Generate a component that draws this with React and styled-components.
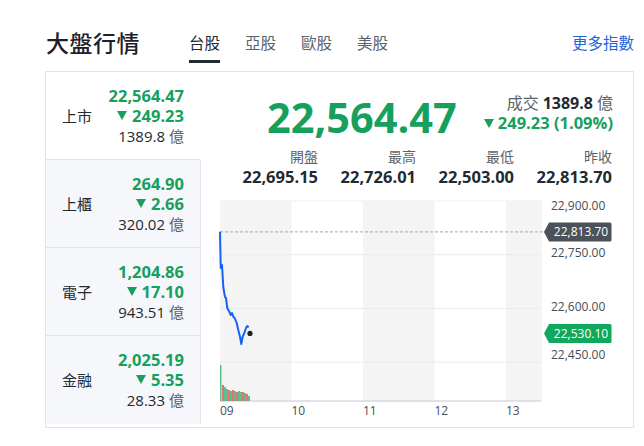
import React from "react";
import styled, { createGlobalStyle } from "styled-components";

const GREEN = "#17a05d";
const DARK = "#232a31";
const GREY = "#5b636a";
const LINE = "#e0e3e8";

const Global = createGlobalStyle`
  html, body { margin: 0; padding: 0; background: #fff; }
  body {
    font-family: "Open Sans", "Noto Sans CJK TC", "Noto Sans", sans-serif;
    color: ${DARK};
    -webkit-font-smoothing: antialiased;
  }
`;

const Page = styled.div`
  width: 644px;
  height: 446px;
  box-sizing: border-box;
  padding: 0 11px 0 45px;
  overflow: hidden;
`;

const Header = styled.div`
  display: flex;
  align-items: flex-end;
  height: 63px;
  margin-bottom: 8px;
`;

const Title = styled.h1`
  margin: 0 49px 4px 1px;
  font-size: 23px;
  line-height: 32px;
  font-weight: 500;
  color: #1d2228;
  letter-spacing: 0.5px;
`;

const Tabs = styled.nav`
  display: flex;
  gap: 25px;
`;

const Tab = styled.span`
  font-size: 15.5px;
  line-height: 22px;
  padding-bottom: 6px;
  border-bottom: 3px solid ${(p) => (p.$active ? DARK : "transparent")};
  color: ${(p) => (p.$active ? DARK : GREY)};
`;

const MoreLink = styled.a`
  margin-left: auto;
  margin-right: -1px;
  margin-bottom: 9px;
  font-size: 15.5px;
  line-height: 22px;
  color: #1e66d6;
  text-decoration: none;
`;

const Card = styled.section`
  display: flex;
  width: 589px;
  height: 357px;
  box-sizing: border-box;
  border: 1px solid ${LINE};
`;

const LeftCol = styled.div`
  display: flex;
  flex-direction: column;
  width: 155px;
  flex: none;
`;

const IndexRow = styled.div`
  display: flex;
  align-items: center;
  justify-content: space-between;
  height: 88px;
  box-sizing: border-box;
  padding: 0 16px;
  background: ${(p) => (p.$active ? "#fff" : "#f5f7fa")};
  border-right: 1px solid ${(p) => (p.$active ? "transparent" : LINE)};
  border-bottom: 1px solid ${(p) => (p.$last ? "transparent" : LINE)};
`;

const RowLabel = styled.span`
  font-size: 15px;
  line-height: 20px;
  color: ${DARK};
`;

const RowValues = styled.div`
  display: flex;
  flex-direction: column;
  align-items: flex-end;
`;

const GreenLine = styled.span`
  display: flex;
  align-items: center;
  font-size: 16.5px;
  line-height: 20px;
  font-weight: 700;
  color: ${GREEN};
`;

const Caret = styled.span`
  display: inline-block;
  width: 0;
  height: 0;
  border-left: 5.5px solid transparent;
  border-right: 5.5px solid transparent;
  border-top: 9px solid ${GREEN};
  margin-right: ${(p) => p.$gap || 5}px;
`;

const VolumeLine = styled.span`
  font-size: 15px;
  line-height: 20px;
  color: ${DARK};
`;

const Unit = styled.span`
  color: ${GREY};
  margin-left: 4px;
`;

const RightPanel = styled.div`
  flex: 1;
  display: flex;
  flex-direction: column;
`;

const Summary = styled.div`
  padding: 19px 20px 0 19px;
`;

const TopRow = styled.div`
  display: flex;
  justify-content: flex-end;
  gap: 27px;
  height: 52px;
`;

const BigPrice = styled.div`
  font-size: 41.5px;
  line-height: 52px;
  font-weight: 700;
  color: ${GREEN};
`;

const TradeInfo = styled.div`
  display: flex;
  flex-direction: column;
  align-items: flex-end;
  margin-top: 2px;
`;

const TradeLine = styled.span`
  font-size: 16px;
  line-height: 20px;
  color: ${GREY};
`;

const Strong = styled.b`
  color: ${DARK};
  font-weight: 700;
  margin: 0 4px;
`;

const Stats = styled.div`
  display: grid;
  grid-template-columns: repeat(4, 98px);
  margin-top: 4px;
  text-align: right;
`;

const StatLabel = styled.div`
  font-size: 14px;
  line-height: 20px;
  color: ${GREY};
`;

const StatValue = styled.div`
  font-size: 16.5px;
  line-height: 20px;
  font-weight: 700;
  color: ${DARK};
`;

const ChartSvg = styled.svg`
  display: block;
  width: 431px;
  height: 239px;
  font-family: "Open Sans", sans-serif;
`;

const rows = [
  { name: "上市", value: "22,564.47", change: "249.23", vol: "1389.8", active: true },
  { name: "上櫃", value: "264.90", change: "2.66", vol: "320.02" },
  { name: "電子", value: "1,204.86", change: "17.10", vol: "943.51" },
  { name: "金融", value: "2,025.19", change: "5.35", vol: "28.33" },
];

const stats = [
  ["開盤", "22,695.15"],
  ["最高", "22,726.01"],
  ["最低", "22,503.00"],
  ["昨收", "22,813.70"],
];

const X0 = 19;
const HOUR = 71.5;
const TOP = 14;
const BOTTOM = 214;
const yOf = (v) => TOP + ((22900 - v) / 150) * 53.7;

const linePts = [
  [19, 44.7], [19.7, 81], [21, 78], [22.3, 100], [24, 110], [25, 111],
  [26.3, 121], [28.3, 124.7], [29.7, 128], [31, 126], [32.3, 129.7],
  [33.7, 131], [35.7, 136], [37.3, 143], [39, 149.7], [40.3, 157],
  [41.7, 149.7], [43.3, 146], [45, 141], [46.3, 139], [47.7, 140.3],
];

const bars = [
  [19, 178, "g"], [21, 198, "r"], [23, 200, "g"], [25, 202, "g"], [27, 203, "r"],
  [29, 204, "g"], [31, 203, "r"], [33, 204, "g"], [35, 205, "r"], [37, 204, "g"],
  [39, 205, "g"], [41, 205, "r"], [43, 206, "g"], [45, 207, "r"], [47, 209, "g"],
];

function Tag({ y, label, color }) {
  const h = 19;
  const x = 343;
  const w = 66;
  const d = `M${x} ${y} L${x + 5} ${y - h / 2} L${x + w} ${y - h / 2} Q${x + w + 1.5} ${y - h / 2} ${x + w + 1.5} ${y - h / 2 + 1.5} L${x + w + 1.5} ${y + h / 2 - 1.5} Q${x + w + 1.5} ${y + h / 2} ${x + w} ${y + h / 2} L${x + 5} ${y + h / 2} Z`;
  return (
    <g>
      <path d={d} fill={color} />
      <text x={x + 37} y={y + 4.2} fill="#fff" fontSize="12" textAnchor="middle">
        {label}
      </text>
    </g>
  );
}

function Chart() {
  const end = X0 + HOUR * 4.5;
  const grid = [22750, 22600, 22450];
  const yLabels = [
    ["22,900.00", 19],
    ["22,750.00", 66],
    ["22,600.00", 120],
    ["22,450.00", 168],
  ];
  const hours = ["09", "10", "11", "12", "13"];
  return (
    <ChartSvg viewBox="0 0 431 239">
      <rect x={X0} y={TOP} width={HOUR} height={BOTTOM - TOP} fill="#f4f4f5" />
      <rect x={X0 + HOUR * 2} y={TOP} width={HOUR} height={BOTTOM - TOP} fill="#f4f4f5" />
      <rect x={X0 + HOUR * 4} y={TOP} width={HOUR / 2} height={BOTTOM - TOP} fill="#f4f4f5" />
      <line x1={X0} x2={end} y1={TOP} y2={TOP} stroke="#eeeff1" />
      {grid.map((v) => (
        <line key={v} x1={X0} x2={end} y1={yOf(v)} y2={yOf(v)} stroke="#e9eaed" />
      ))}
      <line x1={X0} x2={end} y1={BOTTOM} y2={BOTTOM} stroke="#d7dae0" strokeWidth="1.5" />
      {bars.map(([x, t, c], i) => (
        <rect
          key={i}
          x={x}
          y={t}
          width={i === 0 ? 1.5 : 2}
          height={BOTTOM - t}
          fill={c === "g" ? "#5cc08e" : "#e8726d"}
        />
      ))}
      <line
        x1={X0}
        x2={343}
        y1={yOf(22813.7)}
        y2={yOf(22813.7)}
        stroke="#a4a7ab"
        strokeDasharray="3 2"
      />
      <polyline
        points={linePts.map((p) => p.join(",")).join(" ")}
        fill="none"
        stroke="#1463f3"
        strokeWidth="2"
        strokeLinejoin="round"
      />
      <circle cx="49" cy={yOf(22530.1)} r="2.6" fill="#1d2228" />
      {yLabels.map(([t, y]) => (
        <text key={t} x="350" y={y + 4.3} fontSize="12" fill="#464e56">
          {t}
        </text>
      ))}
      {hours.map((h, i) => (
        <text key={h} x={X0 + HOUR * i} y="227.5" fontSize="12" fill="#464e56">
          {h}
        </text>
      ))}
      <Tag y={yOf(22813.7)} label="22,813.70" color="#4b5259" />
      <Tag y={yOf(22530.1)} label="22,530.10" color="#10a85c" />
    </ChartSvg>
  );
}

export default function App() {
  return (
    <Page>
      <Global />
      <Header>
        <Title>大盤行情</Title>
        <Tabs>
          <Tab $active>台股</Tab>
          <Tab>亞股</Tab>
          <Tab>歐股</Tab>
          <Tab>美股</Tab>
        </Tabs>
        <MoreLink href="#">更多指數</MoreLink>
      </Header>
      <Card>
        <LeftCol>
          {rows.map((r, i) => (
            <IndexRow key={r.name} $active={r.active} $last={i === rows.length - 1}>
              <RowLabel>{r.name}</RowLabel>
              <RowValues>
                <GreenLine>{r.value}</GreenLine>
                <GreenLine>
                  <Caret />
                  {r.change}
                </GreenLine>
                <VolumeLine>
                  {r.vol}
                  <Unit>億</Unit>
                </VolumeLine>
              </RowValues>
            </IndexRow>
          ))}
        </LeftCol>
        <RightPanel>
          <Summary>
            <TopRow>
              <BigPrice>22,564.47</BigPrice>
              <TradeInfo>
                <TradeLine>
                  成交<Strong>1389.8</Strong>億
                </TradeLine>
                <GreenLine>
                  <Caret $gap={4} />
                  249.23 (1.09%)
                </GreenLine>
              </TradeInfo>
            </TopRow>
            <Stats>
              {stats.map(([l, v]) => (
                <div key={l}>
                  <StatLabel>{l}</StatLabel>
                  <StatValue>{v}</StatValue>
                </div>
              ))}
            </Stats>
          </Summary>
          <Chart />
        </RightPanel>
      </Card>
    </Page>
  );
}
